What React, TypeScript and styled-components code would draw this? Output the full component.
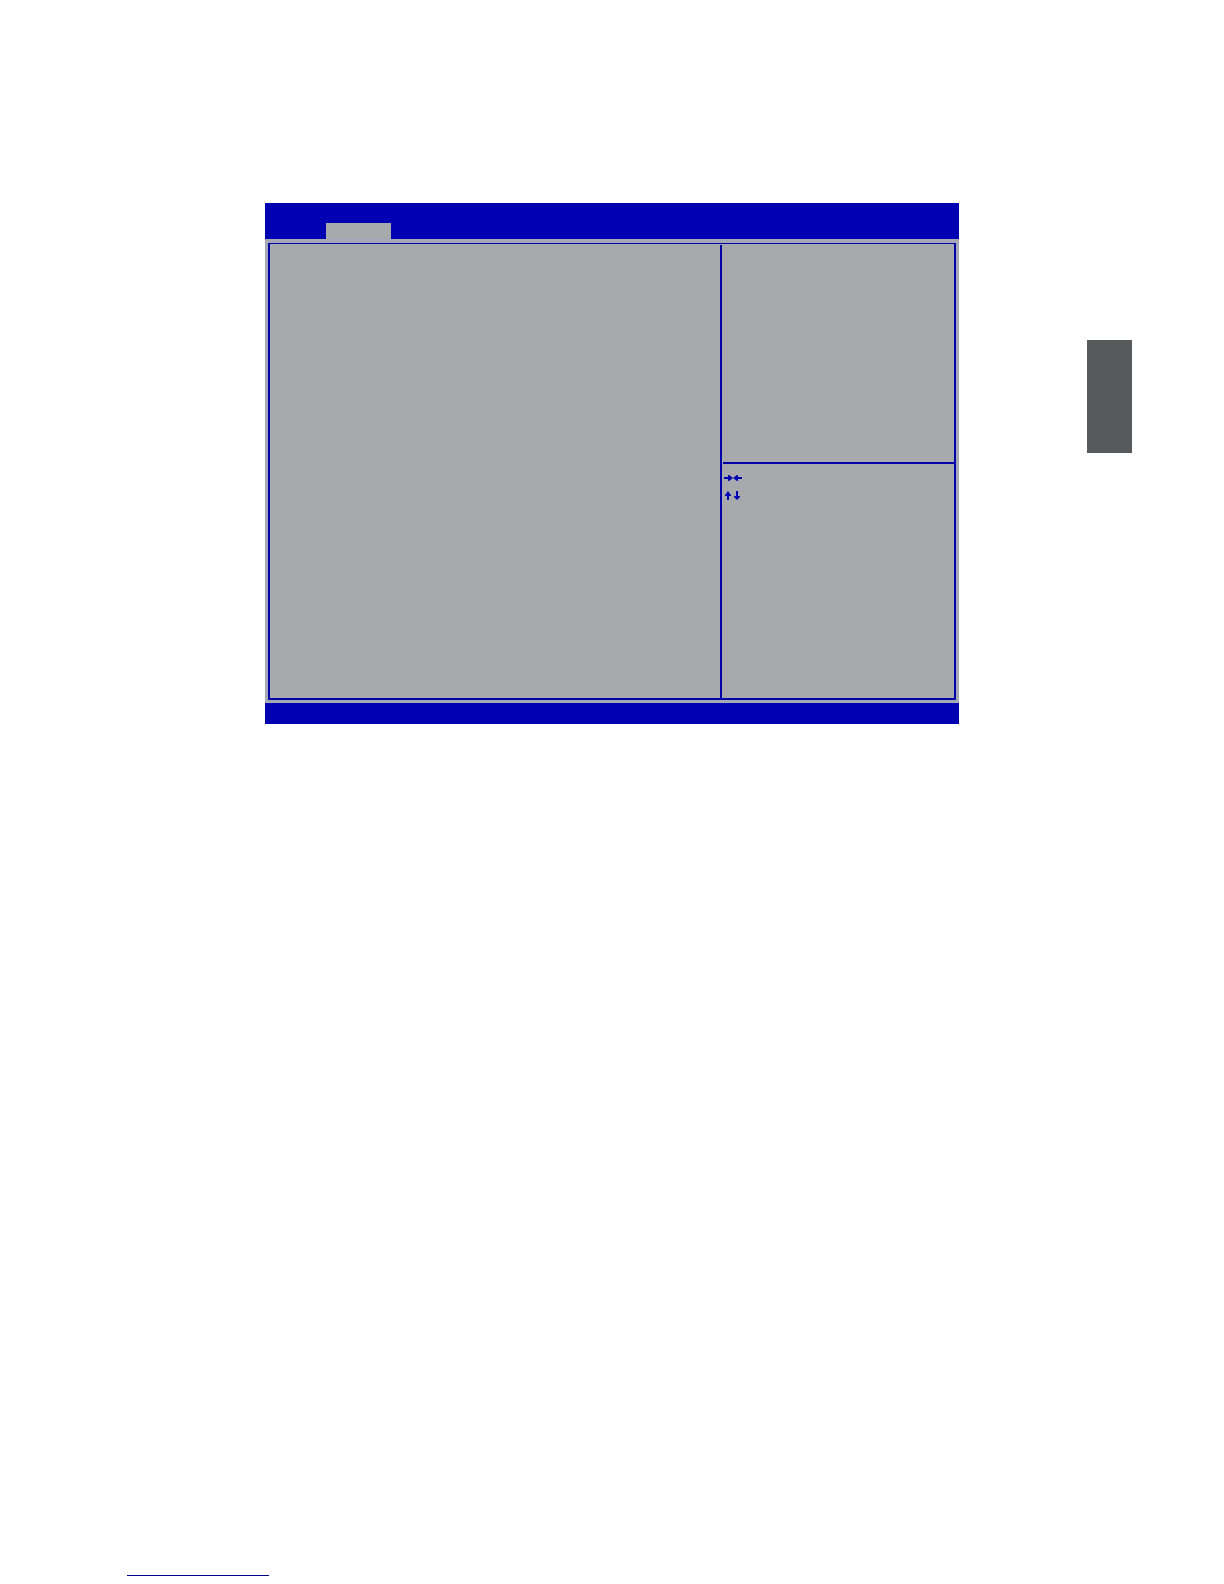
import React from 'react';
import styled, { createGlobalStyle } from 'styled-components';

const blue = '#0000b3';
const line = '#0000a8';
const grey = '#a7a9ac';

const GlobalStyle = createGlobalStyle`
  *, *::before, *::after { box-sizing: border-box; }
  body {
    margin: 0;
    background: #fff;
    font-family: "Liberation Sans", Arial, sans-serif;
  }
`;

const Page = styled.div`
  display: flex;
  flex-direction: column;
  min-height: 100vh;
`;

const Content = styled.main`
  flex: 1;
  display: grid;
  grid-template-columns: 1fr minmax(0, 694px) 1fr;
  align-items: start;
  padding-top: 203px;
`;

const SetupWindow = styled.section`
  grid-column: 2;
  display: flex;
  flex-direction: column;
  background: #a6a8b5;
`;

const MenuBar = styled.nav`
  display: flex;
  align-items: flex-end;
  height: 36px;
  padding-left: 61px;
  background: ${blue};
`;

const MenuTab = styled.button`
  width: 65px;
  height: 16px;
  padding: 0;
  border: 0;
  background: ${grey};
`;

const Frame = styled.div`
  display: grid;
  grid-template-columns: 450fr 2px 232fr;
  margin: 4px 3px 3px;
  border: 2px solid ${line};
  border-top-width: 1px;
  background: ${grey};
`;

const Settings = styled.div`
  min-height: 454px;
`;

const Divider = styled.div`
  margin-top: 1px;
  background: ${line};
`;

const Sidebar = styled.aside`
  display: flex;
  flex-direction: column;
  padding-left: 1px;
`;

const HelpPanel = styled.div`
  height: 218px;
`;

const KeyPanel = styled.div`
  flex: 1;
  display: flex;
  flex-direction: column;
  align-items: flex-start;
  gap: 8px;
  padding: 9px 1px;
  border-top: 2px solid ${line};
`;

const KeyIcon = styled.svg`
  display: block;
  fill: none;
  stroke: ${blue};
  stroke-width: 2;
`;

const ArrowHeads = styled.g`
  fill: ${blue};
  stroke: none;
`;

const StatusBar = styled.footer`
  height: 21px;
  background: ${blue};
`;

const ChapterTab = styled.div`
  grid-column: 3;
  justify-self: end;
  width: 45px;
  height: 113px;
  margin: 137px 92px 0 0;
  background: #58595b;
`;

const PageFooter = styled.footer`
  display: flex;
  padding: 0 127px 8px;
`;

const FooterLink = styled.a`
  width: 142px;
  height: 16px;
  border-bottom: 1px solid #000090;
`;

function HorizontalArrows() {
  return (
    <KeyIcon width="18" height="10" viewBox="0 0 18 10" aria-hidden="true">
      <path d="M0 5H6M12 5H18" />
      <ArrowHeads>
        <path d="M4 2H5L9 5L5 8H4Z" />
        <path d="M14 2H13L9 5L13 8H14Z" />
      </ArrowHeads>
    </KeyIcon>
  );
}

function VerticalArrows() {
  return (
    <KeyIcon width="18" height="10" viewBox="0 0 18 10" aria-hidden="true">
      <path d="M4 3V9M13 0V6" />
      <ArrowHeads>
        <path d="M1 5V4L4 0L7 4V5Z" />
        <path d="M10 5V6L13 9L16 6V5Z" />
      </ArrowHeads>
    </KeyIcon>
  );
}

export default function App() {
  return (
    <>
      <GlobalStyle />
      <Page>
        <Content>
          <SetupWindow aria-label="Setup">
            <MenuBar>
              <MenuTab type="button" aria-label="Selected menu" />
            </MenuBar>
            <Frame>
              <Settings />
              <Divider />
              <Sidebar>
                <HelpPanel />
                <KeyPanel>
                  <HorizontalArrows />
                  <VerticalArrows />
                </KeyPanel>
              </Sidebar>
            </Frame>
            <StatusBar />
          </SetupWindow>
          <ChapterTab />
        </Content>
        <PageFooter>
          <FooterLink href="#top" aria-label="Back to top" />
        </PageFooter>
      </Page>
    </>
  );
}
